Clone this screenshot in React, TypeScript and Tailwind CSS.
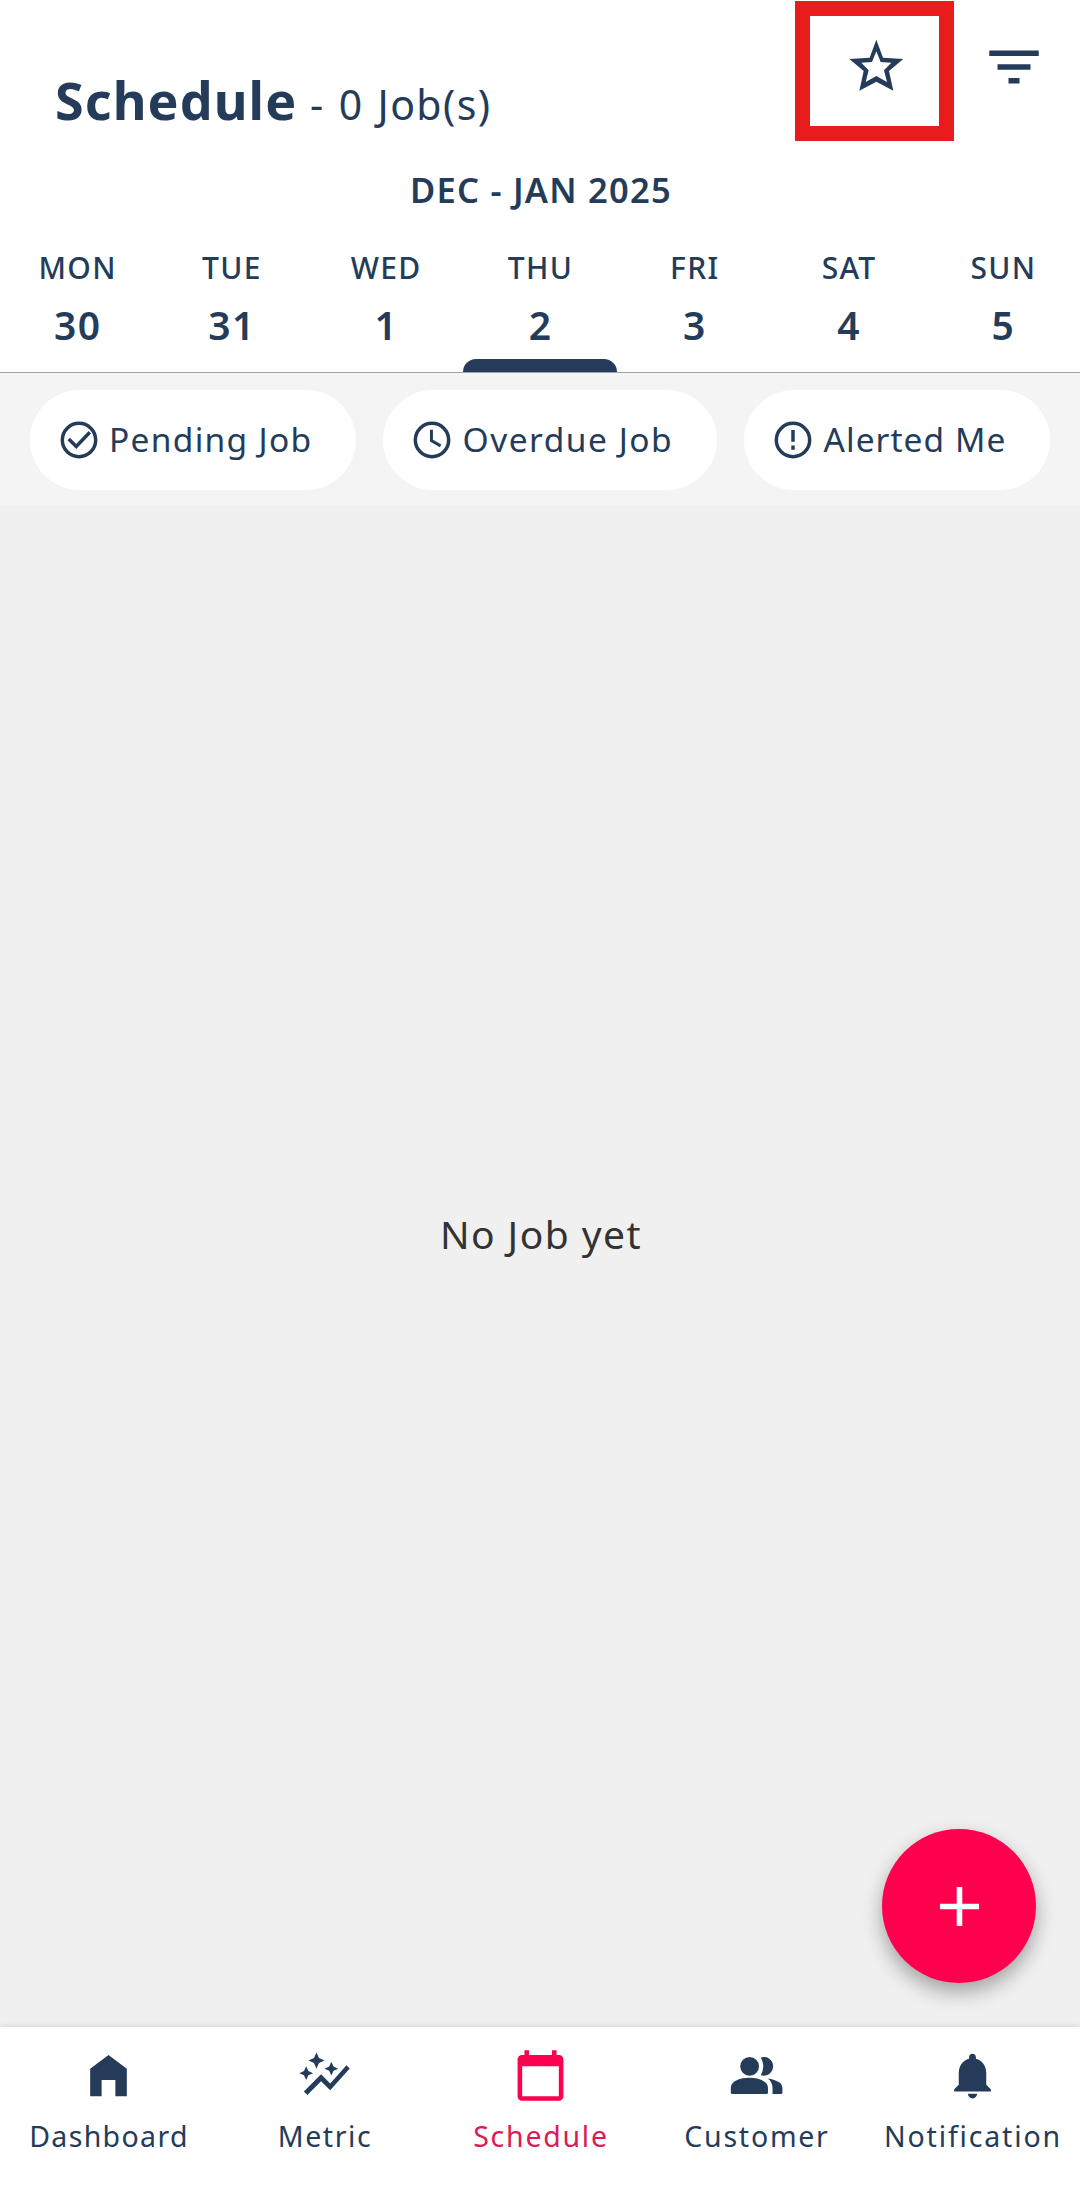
import React from "react";
import { MdAutoGraph, MdCalendarToday, MdNotifications, MdFilterList, MdAdd } from "react-icons/md";

const days = [
  ["MON", "30"],
  ["TUE", "31"],
  ["WED", "1"],
  ["THU", "2"],
  ["FRI", "3"],
  ["SAT", "4"],
  ["SUN", "5"],
];

const Check = () => <path d="M6.4 11.4l4.1 4.1 7.4-7.7" />;
const Clock = () => <path d="M11.7 6.4v5.9l5 2.9" strokeWidth="1.6" />;
const Alert = () => <path d="M12 6.5v6.5M12 15v2.3" />;

function Pill({ width, label, textClass, children }: { width: string; label: string; textClass: string; children: React.ReactNode }) {
  return (
    <div className={`flex h-[99.5px] items-center rounded-full bg-white pl-[27px] ${width}`}>
      <svg viewBox="0 0 24 24" className="size-[44px] shrink-0" fill="none" stroke="currentColor" strokeWidth="1.9">
        <circle cx="12" cy="12" r="9.1" />
        {children}
      </svg>
      <span className={`ml-[8.5px] whitespace-nowrap text-[33.5px] leading-none ${textClass}`}>{label}</span>
    </div>
  );
}

function Tab({ label, icon, active, textClass }: { label: string; icon: React.ReactNode; active?: boolean; textClass: string }) {
  return (
    <div className={`flex w-[216px] flex-col items-center pt-[21px] ${active ? "text-[#ff004e]" : ""}`}>
      {icon}
      <span className={`mt-[13px] whitespace-nowrap pl-[2px] text-[28.5px] leading-[40px] ${textClass} ${active ? "text-[#dc1a55]" : ""}`}>{label}</span>
    </div>
  );
}

const HomeIcon = () => (
  <svg viewBox="0 0 24 24" fill="currentColor" className="size-[55px]">
    <path d="M4 21V9l8-6 8 6v12h-5v-7H9v7z" />
  </svg>
);

const PeopleIcon = () => (
  <svg viewBox="0 0 24 24" fill="currentColor" className="size-[55px]">
    <circle cx="9" cy="8" r="4.1" />
    <path d="M.8 17.3C.8 14.4 5 13 8.9 13s8.1 1.4 8.1 4.3v2.1q0 .7-.7.7H1.5q-.7 0-.7-.7z" />
    <path d="M13.9 4.1A4.1 4.1 0 1 1 13.9 11.9Q16 8 13.9 4.1z" />
    <path d="M16.9 13.3c3.6.6 6.4 1.7 6.4 4.1v2q0 .7-.7.7H19v-2.7c0-1.8-.8-3.2-2.1-4.1z" />
  </svg>
);

export default function App() {
  return (
    <div className="flex h-[2186px] w-[1080px] flex-col overflow-hidden bg-[#f0f0f0] font-['Noto_Sans',sans-serif] text-[#243c5a]">
      <header className="h-[373px] shrink-0 bg-white">
        <div className="flex h-[160px] items-start">
          <h1 className="flex w-[795px] items-baseline pt-[65px] pl-[55px] leading-[70px]">
            <span className="w-[255px] text-[52px] font-bold tracking-[1.1px]">Schedule</span>
            <span className="text-[41px] tracking-[1.4px] [word-spacing:2px]">- 0 Job(s)</span>
          </h1>
          <button className="mt-px flex h-[140px] w-[159px] border-[15px] border-[#e81c1c] pt-[23px] pl-[39px]">
            <svg viewBox="207 118 165 157" className="h-[52.3px] w-[55px] shrink-0" fill="currentColor" fillRule="evenodd">
              <path d="M289 120L309 174 370 178 327 214 340 273 289 246 238 273 251 214 208 178 269 174ZM289 155L302 187 334 189 312 212 321 247 289 229 257 247 266 212 244 189 276 187Z" />
            </svg>
          </button>
          <MdFilterList className="mt-[34px] ml-[27px] size-[66px]" />
        </div>
        <div className="h-[80px] pt-[5px] pl-[2px] text-center text-[34.5px] leading-[50px] font-semibold tracking-[1.25px]">DEC - JAN 2025</div>
        <div className="grid h-[118.5px] grid-cols-7 text-center">
          {days.map(([d, n]) => (
            <div key={d} className="pt-[8px]">
              <div className="pl-[1px] text-[30px] leading-[40px] font-medium tracking-[1.3px]">{d}</div>
              <div className="mt-[9.5px] pl-[1px] text-[39px] leading-[54px] font-semibold tracking-[1.3px]">{n}</div>
            </div>
          ))}
        </div>
        <div className="mx-auto h-[13.5px] w-[154px] rounded-t-[14px] bg-[#243c5a]" />
        <div className="h-px bg-[#91a4b3]" />
      </header>
      <section className="flex h-[132px] shrink-0 gap-[27px] bg-[#f4f4f4] pt-[17px] pl-[29.5px]">
        <Pill width="w-[326.5px]" label="Pending Job" textClass="tracking-[1.3px]">
          <Check />
        </Pill>
        <Pill width="w-[334px]" label="Overdue Job" textClass="tracking-[1.5px]">
          <Clock />
        </Pill>
        <Pill width="w-[306px]" label="Alerted Me" textClass="tracking-[1.05px]">
          <Alert />
        </Pill>
      </section>
      <main className="relative flex-1">
        <p className="pt-[702px] pl-[2px] text-center text-[39px] leading-[54px] tracking-[1.45px] text-[#333]">No Job yet</p>
        <button className="absolute top-[1324px] left-[882px] flex size-[154px] items-center justify-center rounded-full bg-[#ff004e] text-white shadow-[0_9px_20px_rgba(0,0,0,0.33)]">
          <MdAdd className="size-[67px]" />
        </button>
      </main>
      <nav className="relative flex h-[159px] shrink-0 bg-white shadow-[0_0_7px_rgba(0,0,0,0.15)]">
        <Tab label="Dashboard" textClass="tracking-[1.35px]" icon={<HomeIcon />} />
        <Tab label="Metric" textClass="tracking-[1.6px]" icon={<MdAutoGraph className="size-[55px]" />} />
        <Tab label="Schedule" active textClass="tracking-[1.75px]" icon={<MdCalendarToday className="size-[55px]" />} />
        <Tab label="Customer" textClass="tracking-[1.75px]" icon={<PeopleIcon />} />
        <Tab label="Notification" textClass="tracking-[1.85px]" icon={<MdNotifications className="size-[55px]" />} />
      </nav>
    </div>
  );
}
